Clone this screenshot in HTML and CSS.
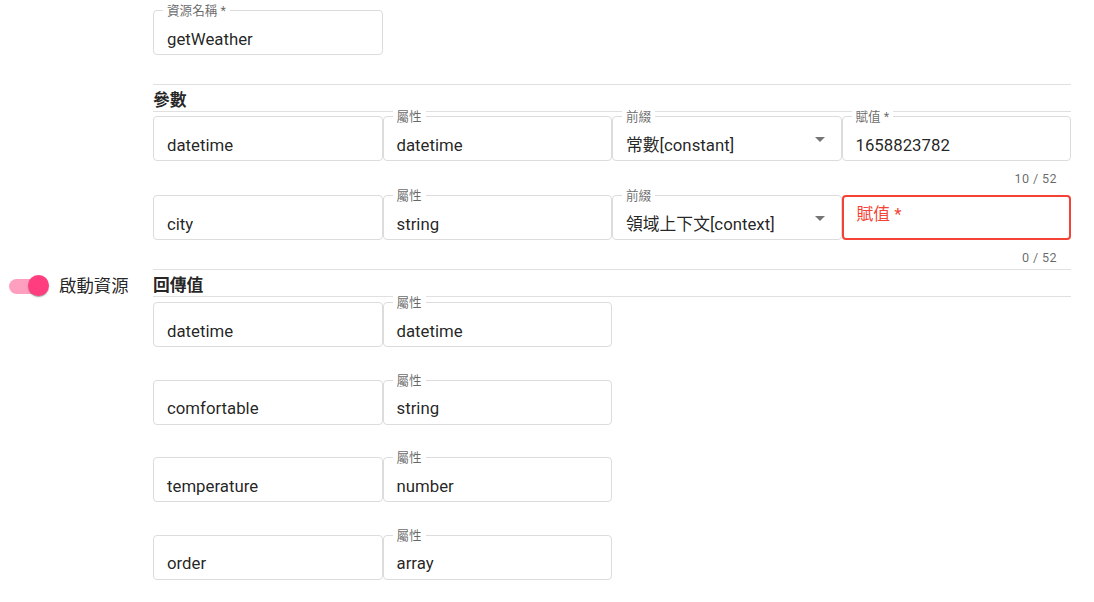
FILE: index.html
```html
<!DOCTYPE html>
<html lang="zh-Hant">
<head>
<meta charset="utf-8">
<title>Resource</title>
<link rel="stylesheet" href="styles.css">
</head>
<body>
<div class="page">
  <aside class="side">
    <div class="switch-row">
      <span class="switch"><span class="track"></span><span class="thumb"></span></span>
      <span class="switch-label">啟動資源</span>
    </div>
  </aside>
  <main class="form">
    <div class="row tall">
      <div class="cell"><div class="field"><span class="label">資源名稱 *</span>getWeather</div></div>
    </div>

    <div class="section-head">參數</div>
    <div class="rows params">
      <div class="row tall">
        <div class="cell"><div class="field">datetime</div></div>
        <div class="cell"><div class="field"><span class="label">屬性</span>datetime</div></div>
        <div class="cell"><div class="field select"><span class="label">前綴</span>常數[constant]<span class="arrow"></span></div></div>
        <div class="cell"><div class="field"><span class="label">賦值 *</span>1658823782</div><div class="helper">10 / 52</div></div>
      </div>
      <div class="row tall">
        <div class="cell"><div class="field">city</div></div>
        <div class="cell"><div class="field"><span class="label">屬性</span>string</div></div>
        <div class="cell"><div class="field select"><span class="label">前綴</span>領域上下文[context]<span class="arrow"></span></div></div>
        <div class="cell"><div class="field error">賦值 *</div><div class="helper">0 / 52</div></div>
      </div>
    </div>

    <div class="section-head">回傳值</div>
    <div class="rows returns">
      <div class="row">
        <div class="cell"><div class="field">datetime</div></div>
        <div class="cell"><div class="field"><span class="label">屬性</span>datetime</div></div>
      </div>
      <div class="row">
        <div class="cell"><div class="field">comfortable</div></div>
        <div class="cell"><div class="field"><span class="label">屬性</span>string</div></div>
      </div>
      <div class="row">
        <div class="cell"><div class="field">temperature</div></div>
        <div class="cell"><div class="field"><span class="label">屬性</span>number</div></div>
      </div>
      <div class="row">
        <div class="cell"><div class="field">order</div></div>
        <div class="cell"><div class="field"><span class="label">屬性</span>array</div></div>
      </div>
    </div>
  </main>
</div>
</body>
</html>
```

FILE: styles.css
```css
html, body {
  margin: 0;
  padding: 0;
  background: #ffffff;
}

body {
  font-family: Roboto, "Noto Sans CJK TC", sans-serif;
  color: rgba(0, 0, 0, 0.87);
  font-size: 16.8px;
}

.page {
  display: flex;
  width: 1094px;
}

.side {
  width: 153px;
  flex: none;
  box-sizing: border-box;
  padding-top: 275px;
  padding-left: 9px;
}

.switch-row {
  display: flex;
  align-items: center;
  gap: 10px;
  height: 22px;
}

.switch {
  position: relative;
  width: 40px;
  height: 22px;
  flex: none;
}

.track {
  position: absolute;
  left: 0;
  top: 3.5px;
  width: 36px;
  height: 15px;
  border-radius: 8px;
  background: rgba(255, 64, 129, 0.5);
}

.thumb {
  position: absolute;
  left: 19px;
  top: 0;
  width: 21px;
  height: 21px;
  border-radius: 50%;
  background: #ff3d7f;
  box-shadow: 0 2px 1px -1px rgba(0, 0, 0, 0.2), 0 1px 1px 0 rgba(0, 0, 0, 0.14), 0 1px 3px 0 rgba(0, 0, 0, 0.12);
}

.switch-label {
  font-size: 17.4px;
  line-height: 22px;
}

.form {
  width: 918px;
  flex: none;
  padding-top: 10px;
}

.row {
  display: grid;
  grid-template-columns: repeat(4, 1fr);
}

.row.tall {
  height: 74px;
}

.rows {
  display: flex;
  flex-direction: column;
}

.params {
  gap: 5px;
}

.returns {
  gap: 32.67px;
  padding-top: 1px;
}

.cell {
  display: flex;
  flex-direction: column;
  min-width: 0;
}

.field {
  position: relative;
  height: 45px;
  box-sizing: border-box;
  border: 1px solid #dcdcdc;
  border-radius: 4px;
  padding: 17.5px 14px 0 13px;
  font-size: 16.8px;
  line-height: 20px;
  white-space: nowrap;
  color: rgba(0, 0, 0, 0.87);
}

.label {
  position: absolute;
  top: -8px;
  left: 9px;
  padding: 0 4px;
  background: #ffffff;
  font-size: 12.6px;
  line-height: 15px;
  color: rgba(0, 0, 0, 0.6);
}

.select .arrow {
  position: absolute;
  right: 16px;
  top: 20px;
  width: 0;
  height: 0;
  border-left: 5px solid transparent;
  border-right: 5px solid transparent;
  border-top: 5px solid rgba(0, 0, 0, 0.54);
}

.field.error {
  border: 2px solid #f44336;
  padding: 7px 13px 0 13px;
  color: #f44336;
}

.helper {
  margin-top: 8px;
  padding-right: 14px;
  text-align: right;
  font-size: 12.6px;
  line-height: 20px;
  letter-spacing: 0.4px;
  color: rgba(0, 0, 0, 0.6);
}

.section-head {
  height: 28px;
  box-sizing: border-box;
  border-top: 1px solid #e0e0e0;
  border-bottom: 1px solid #e0e0e0;
  padding-top: 4px;
  margin-bottom: 4px;
  font-size: 16.8px;
  line-height: 22px;
  font-weight: 700;
  color: rgba(0, 0, 0, 0.87);
}
```
